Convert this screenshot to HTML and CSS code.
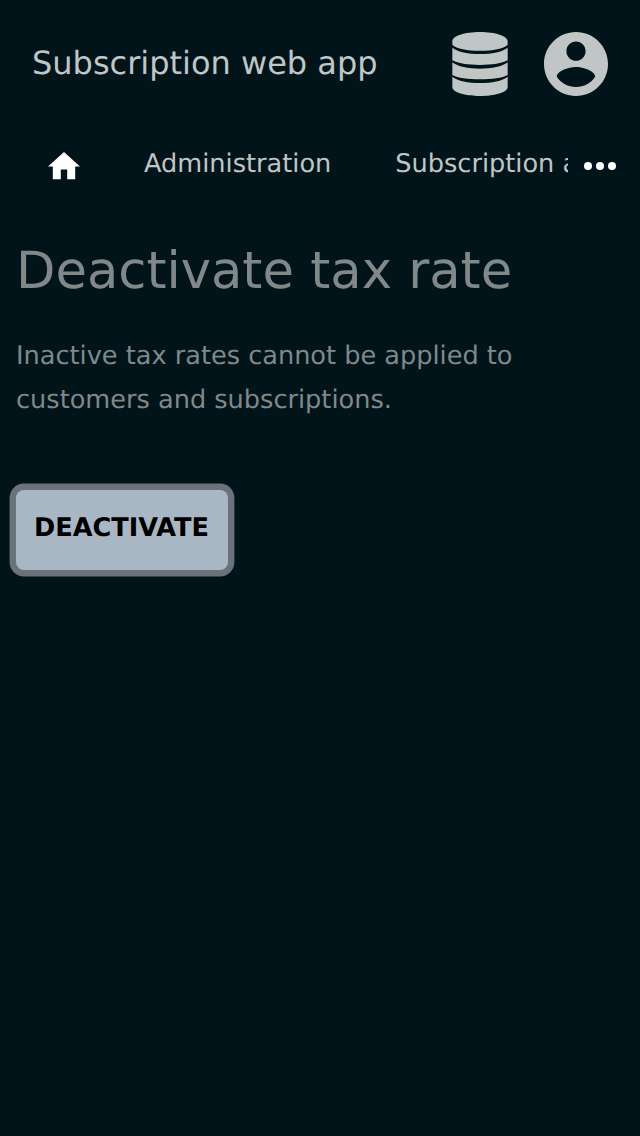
FILE: index.html
```
<!DOCTYPE html>
<html lang="en">
<head>
<meta charset="utf-8">
<title>Deactivate tax rate</title>
<link rel="stylesheet" href="styles.css">
</head>
<body>
<header class="topbar">
  <div class="brand">Subscription web app</div>
  <div class="actions">
    <svg class="icon-db" viewBox="0 0 168 192"><path d="M1 28C1 12 38 0 84 0s83 12 83 28v10c-13 12-44 18-83 18S14 50 1 38zM1 47c16 13 47 19 83 19s67-6 83-19v38c-16 9-47 14-83 14S17 94 1 85zM1 91c16 13 47 19 83 19s67-6 83-19v38c-16 9-47 13-83 13S17 138 1 129zM1 134c16 13 47 19 83 19s67-6 83-19v31c0 16-38 27-83 27S1 181 1 165z"/></svg>
    <svg class="icon-user" viewBox="2 2 20 20"><path d="M12 2C6.480 2 2 6.480 2 12s4.480 10 10 10 10-4.480 10-10S17.520 2 12 2zm0 3c1.660 0 3 1.340 3 3s-1.340 3-3 3-3-1.340-3-3 1.340-3 3-3zm0 14.200c-2.500 0-4.710-1.280-6-3.220.03-1.990 4-3.080 6-3.080 1.990 0 5.970 1.090 6 3.080-1.290 1.940-3.500 3.220-6 3.220z"/></svg>
  </div>
</header>
<nav class="tabs">
  <a class="home"><svg viewBox="2 3 20 17"><path d="M10 20v-6h4v6h5v-8h3L12 3 2 12h3v8z"/></svg></a>
  <div class="links"><a>Administration</a><a>Subscription app</a></div>
  <a class="more"><svg viewBox="4 10 16 4"><circle cx="6" cy="12" r="2"/><circle cx="12" cy="12" r="2"/><circle cx="18" cy="12" r="2"/></svg></a>
</nav>
<main class="content">
  <h1>Deactivate tax rate</h1>
  <p>Inactive tax rates cannot be applied to customers and subscriptions.</p>
  <button class="deactivate">DEACTIVATE</button>
</main>
</body>
</html>
```
FILE: styles.css
```
* { box-sizing: border-box; }
body { margin: 0; min-height: 1136px; background: #001419; color: #80888a; font-family: "DejaVu Sans", sans-serif; text-rendering: geometricPrecision; }
svg { display: block; }
.topbar { display: flex; justify-content: space-between; align-items: center; height: 128px; padding: 0 32px; color: #c0c6c6; }
.brand { padding-bottom: 2px; font-size: 32px; line-height: 44px; white-space: nowrap; }
.actions { display: flex; gap: 36px; }
.icon-db { width: 56px; height: 64px; fill: #c0c6c6; }
.icon-user { width: 64px; height: 64px; fill: #c0c6c6; }
.tabs { display: flex; align-items: center; height: 72px; color: #c0c6c6; font-size: 25.6px; }
.home { padding: 4px 32px 0 48px; }
.home svg { width: 32px; height: 27.2px; fill: #fff; }
.links { display: flex; gap: 64px; width: 456px; padding: 0 0 0 32px; overflow: hidden; white-space: nowrap; }
.more { padding: 4px 0 0 16px; }
.more svg { width: 32px; height: 8px; fill: #fff; }
.content { padding: 33px 16px; }
h1 { margin: 0; font-size: 51.2px; line-height: 76px; font-weight: 400; }
p { margin: 25px 0 0; font-size: 25.6px; line-height: 44px; }
.deactivate { display: block; margin-top: 68px; width: 212px; height: 80px; padding: 0 1px 4px 0; border: 0; border-radius: 8px; background: #a9b6c3; box-shadow: 0 0 0 6.4px #6a737c; color: #000; font: bold 25.6px "DejaVu Sans", sans-serif; text-rendering: geometricPrecision; }
```
